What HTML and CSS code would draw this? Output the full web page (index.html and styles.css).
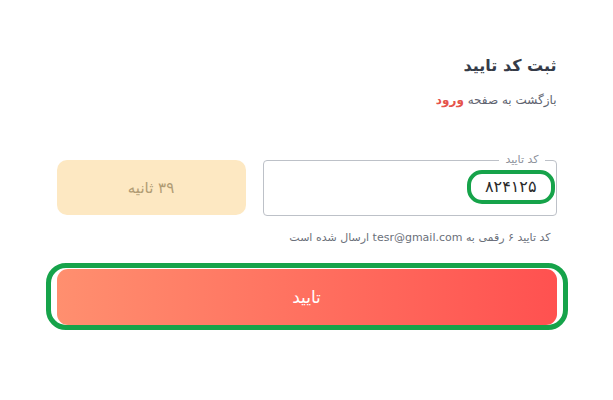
FILE: index.html
```html
<!DOCTYPE html>
<html lang="fa" dir="rtl">

<head>
    <title>ثبت کد تایید</title>
    <meta charset="utf-8">
    <meta name="viewport" content="width=device-width, initial-scale=1.0">
    <link rel="stylesheet" href="styles.css">
</head>

<body>
    <div class="verify">
        <h1 class="title">ثبت کد تایید</h1>
        <p class="back">بازگشت به صفحه <a href="#">ورود</a></p>

        <div class="code-row">
            <fieldset class="code-field">
                <legend>کد تایید</legend>
                <span class="code-value">۸۲۴۱۲۵</span>
            </fieldset>
            <div class="timer">۳۹ ثانیه</div>
        </div>
        <p class="hint">کد تایید ۶ رقمی به <span dir="ltr">tesr@gmail.com</span> ارسال شده است</p>

        <div class="submit-ring">
            <button class="submit">تایید</button>
        </div>
    </div>
</body>

</html>
```

FILE: styles.css
```css
body {
    margin: 0;
    padding: 0;
    background-color: white;
    font-family: "DejaVu Sans", "Noto Sans", sans-serif;
    color: #333a48;
}

.verify {
    width: 500px;
    margin: 0 auto;
    padding-top: 53px;
}

.title {
    margin: 0;
    font-size: 16px;
    font-weight: bold;
    line-height: 26px;
    color: #353b48;
}

.back {
    margin: 11px 0 0 0;
    font-size: 12px;
    line-height: 20px;
    color: #5f6470;
}

.back a {
    color: #e5534b;
    font-weight: bold;
    text-decoration: none;
}

.code-row {
    display: flex;
    gap: 17px;
    margin-top: 50px;
}

.code-field {
    width: 294px;
    box-sizing: border-box;
    margin: -7px 0 0 0;
    height: 63px;
    padding: 0 1px 0 0;
    border: 1px solid #bdc1c8;
    border-radius: 4px;
    display: flex;
    align-items: center;
}

.code-field legend {
    margin-right: 10px;
    padding: 0 6px;
    font-size: 11px;
    line-height: 14px;
    color: #8c919b;
}

.code-value {
    display: inline-block;
    border: 4px solid #16a34a;
    border-radius: 15px;
    padding: 0 14px;
    height: 26px;
    line-height: 26px;
    font-size: 16px;
    color: #2a2a2a;
    margin-top: -8px;
}

.timer {
    width: 189px;
    height: 55px;
    border-radius: 10px;
    background-color: #fde8c2;
    color: #b19c74;
    font-size: 15px;
    display: flex;
    align-items: center;
    justify-content: center;
}

.hint {
    margin: 14px 6px 0 0;
    font-size: 11px;
    line-height: 16px;
    color: #6b707a;
}

.submit-ring {
    margin: 17px -11px 0 -11px;
    border: 5px solid #16a34a;
    border-radius: 20px;
    padding: 0 6px;
    height: 57px;
    display: flex;
    align-items: center;
}

.submit {
    width: 100%;
    height: 56px;
    border: 0;
    border-radius: 11px;
    background: linear-gradient(to left, #ff5150, #ff8f6f);
    color: white;
    font-family: inherit;
    font-size: 17px;
    cursor: pointer;
}
```
